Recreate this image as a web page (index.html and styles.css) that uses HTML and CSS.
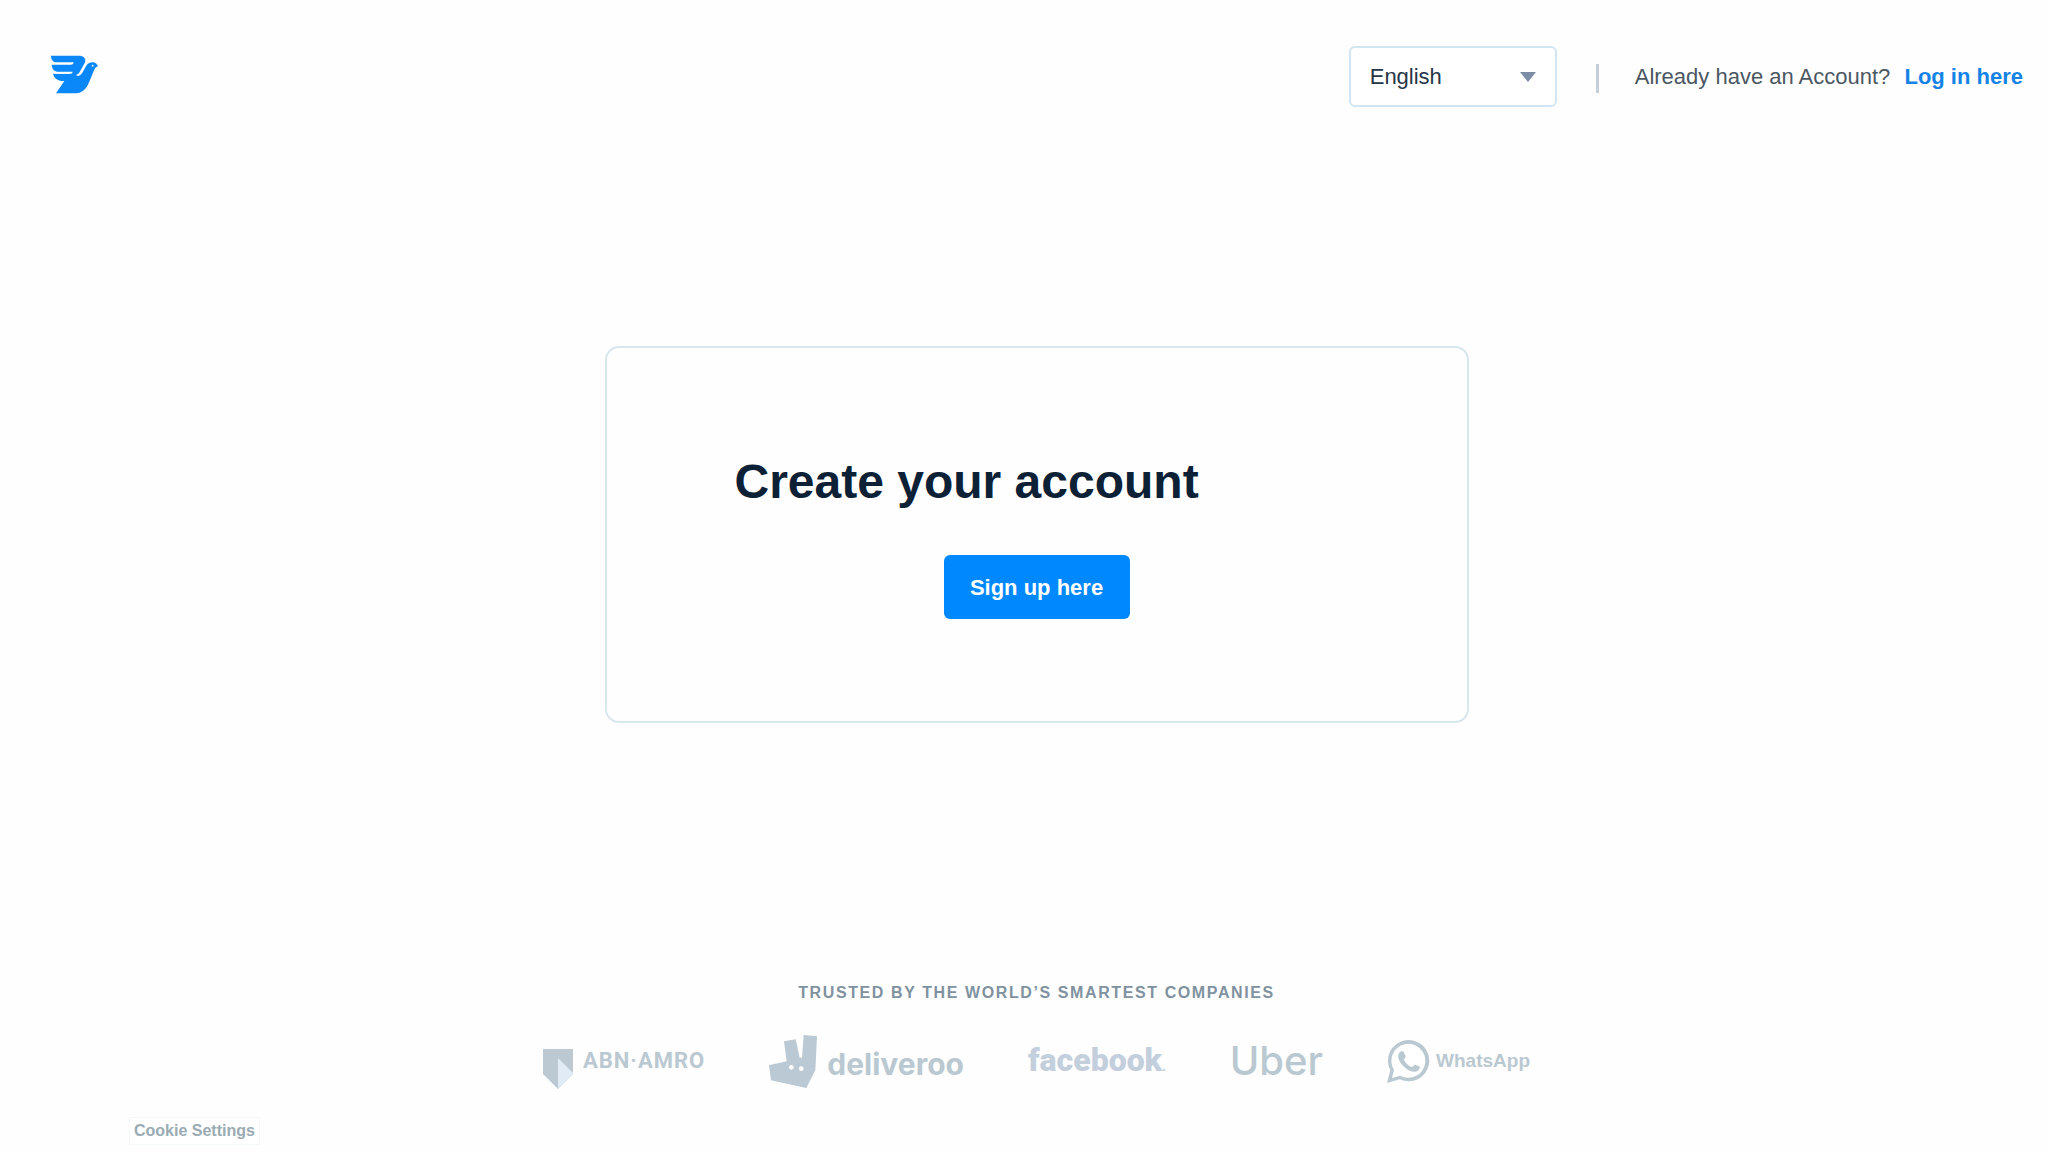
FILE: index.html
```html
<!DOCTYPE html>
<html lang="en">
<head>
<meta charset="utf-8">
<meta name="viewport" content="width=device-width, initial-scale=1">
<title>Create your account</title>
<link rel="stylesheet" href="styles.css">
</head>
<body>
<div class="page">
  <header class="header">
    <a class="home" href="#" aria-label="Home">
      <svg class="bird" width="48" height="40" viewBox="30 45 144 120" aria-hidden="true">
        <path d="M33 47H119C133 47 140 59 134 69L119 96C116 101 113 104 107 105L114 108C124 105 127 99 132 89L138 79C143 70 149 67 158 67C167 67 171 72 174 79C168 80 165 84 162 91L148 125C138 149 126 160 103 160H48L73 123C53 124 42 114 39 101H91C95 101 97 99 98 95H55C43 95 36 88 35 74H93C98 74 100 71 101 67H50C39 67 33 59 33 47Z" fill="#0a87f8"/>
        <path d="M39 96H91L88 101H44Z" fill="#fff"/>
        <circle cx="158" cy="77" r="3" fill="#d9efff"/>
      </svg>
    </a>
    <div class="language">
      <select class="language-select" aria-label="Language">
        <option>English</option>
        <option>Español</option>
        <option>Nederlands</option>
      </select>
      <svg class="caret" width="16" height="10" viewBox="0 0 16 10" aria-hidden="true"><path d="M0 0H16L8 10Z" fill="#7b8ca6"/></svg>
    </div>
    <span class="divider"></span>
    <p class="login">Already have an Account? <a class="login-link" href="#">Log in here</a></p>
  </header>

  <main class="card">
    <h1 class="title">Create your account</h1>
    <button class="signup" type="button">Sign up here</button>
  </main>

  <section class="trusted">
    <h2 class="trusted-title">TRUSTED BY THE WORLD’S SMARTEST COMPANIES</h2>
    <ul class="brands">
      <li class="brand abn">
        <svg class="shield" width="30" height="40" viewBox="0 0 30 40" aria-hidden="true">
          <path d="M0 0H30V25L15 40L0 25Z" fill="#bcc8d2"/>
          <path d="M15 9L30 24V25L15 40Z" fill="#e0ebf6"/>
        </svg>
        <span>ABN·AMRO</span>
      </li>
      <li class="brand deliveroo">
        <svg width="48" height="53" viewBox="0 0 144 159" aria-hidden="true">
          <path d="M45 19L80 13L92 68H99L104 0L144 4L139 105L112 159L6 136L0 91L53 79Z" fill="#bac9d3"/>
          <circle cx="67" cy="97" r="7" fill="#fff"/><circle cx="97" cy="101" r="7" fill="#fff"/>
        </svg>
        <span class="wordmark">deliveroo</span>
      </li>
      <li class="brand facebook"><span class="wordmark">facebook<span class="mark">.</span></span></li>
      <li class="brand uber"><span>Uber</span></li>
      <li class="brand whatsapp">
        <svg width="43" height="43" viewBox="0 0 129 129" aria-hidden="true">
          <path d="M0 129L10 91A62 62 0 1 1 38 118Z" fill="#bac8d1"/>
          <path d="M15 114L21 90A51 51 0 1 1 39 107Z" fill="#fff"/>
          <path d="M43 34C46 33 49 33 51 38L56 49C57 52 51 57 51 59C56 70 64 77 74 81C77 82 81 74 84 74L96 79C101 82 96 91 92 93C80 99 64 92 52 81C40 69 31 55 34 44C36 39 39 35 43 34Z" fill="#bac8d1"/>
        </svg>
        <span>WhatsApp</span>
      </li>
    </ul>
  </section>
</div>
<button class="cookies" type="button">Cookie Settings</button>
</body>
</html>
```
FILE: styles.css
```css
*, *::before, *::after { box-sizing: border-box; }

body {
  margin: 0;
  background: #fefefe;
  color: #0c2136;
  font-family: "Liberation Sans", Arial, sans-serif;
  font-size: 22px;
}

.page {
  display: flex;
  flex-direction: column;
  align-items: center;
  padding: 46px 25px 62px 50px;
}

.header {
  display: flex;
  align-items: center;
  align-self: stretch;
  height: 61px;
}

.home { display: flex; margin-right: auto; padding-bottom: 3px; }

.language { position: relative; width: 208px; }

.language-select {
  appearance: none;
  display: block;
  width: 100%;
  height: 61px;
  padding: 0 48px 0 19px;
  border: 2px solid #d3e5f1;
  border-radius: 6px;
  background: #fff;
  color: #263645;
  font: inherit;
}

.caret {
  position: absolute;
  top: 26px;
  right: 21px;
  pointer-events: none;
}

.divider {
  width: 3px;
  height: 29px;
  margin: 3px 36px 0 39px;
  background: #c6ced8;
}

.login { margin: 0; padding-top: 1px; color: #4b5762; }

.login-link {
  margin-left: 8px;
  color: #1583e6;
  font-weight: 700;
  text-decoration: none;
}

.card {
  display: flex;
  flex-direction: column;
  width: 100%;
  max-width: 864px;
  margin-top: 239px;
  padding: 104px 128px 102px;
  border: 2px solid #d8e6ee;
  border-radius: 14px;
}

.title {
  margin: 0 0 43px;
  font-size: 48px;
  line-height: 60px;
}

.signup {
  align-self: center;
  width: 186px;
  height: 64px;
  padding: 1px 0 0;
  border: 0;
  border-radius: 6px;
  background: #0088ff;
  color: #fff;
  font: inherit;
  font-weight: 700;
}

.trusted { margin-top: 258px; text-align: center; }

.trusted-title {
  margin: 0;
  color: #8092a0;
  font-size: 16px;
  line-height: 24px;
  letter-spacing: 0.1em;
}

.brands {
  display: flex;
  justify-content: center;
  gap: 64px;
  margin: 28px 0 0;
  padding: 0;
  list-style: none;
}

.brand {
  display: flex;
  align-items: center;
  height: 56px;
  color: #bac8d1;
  font-weight: 700;
  line-height: 32px;
}

.abn {
  gap: 10px;
  font-family: Roboto, sans-serif;
  font-size: 22px;
  letter-spacing: 1px;
}

.shield { align-self: flex-end; }

.deliveroo { gap: 10px; font-family: Inter, sans-serif; font-size: 30px; }

.wordmark { padding-top: 5px; }

.facebook { color: #c3cfdc; font-family: Roboto, sans-serif; font-size: 32px; font-weight: 900; }

.mark { font-size: 12px; }

.uber { font-family: Inter, sans-serif; font-size: 40px; font-weight: 500; }

.whatsapp { gap: 6px; font-size: 19px; }

.cookies {
  position: fixed;
  left: 129px;
  bottom: 7px;
  height: 28px;
  padding: 0 4px;
  border: 1px solid #f5f8f9;
  background: #fff;
  color: #9aabb3;
  font: inherit;
  font-size: 16px;
  font-weight: 700;
}
```
